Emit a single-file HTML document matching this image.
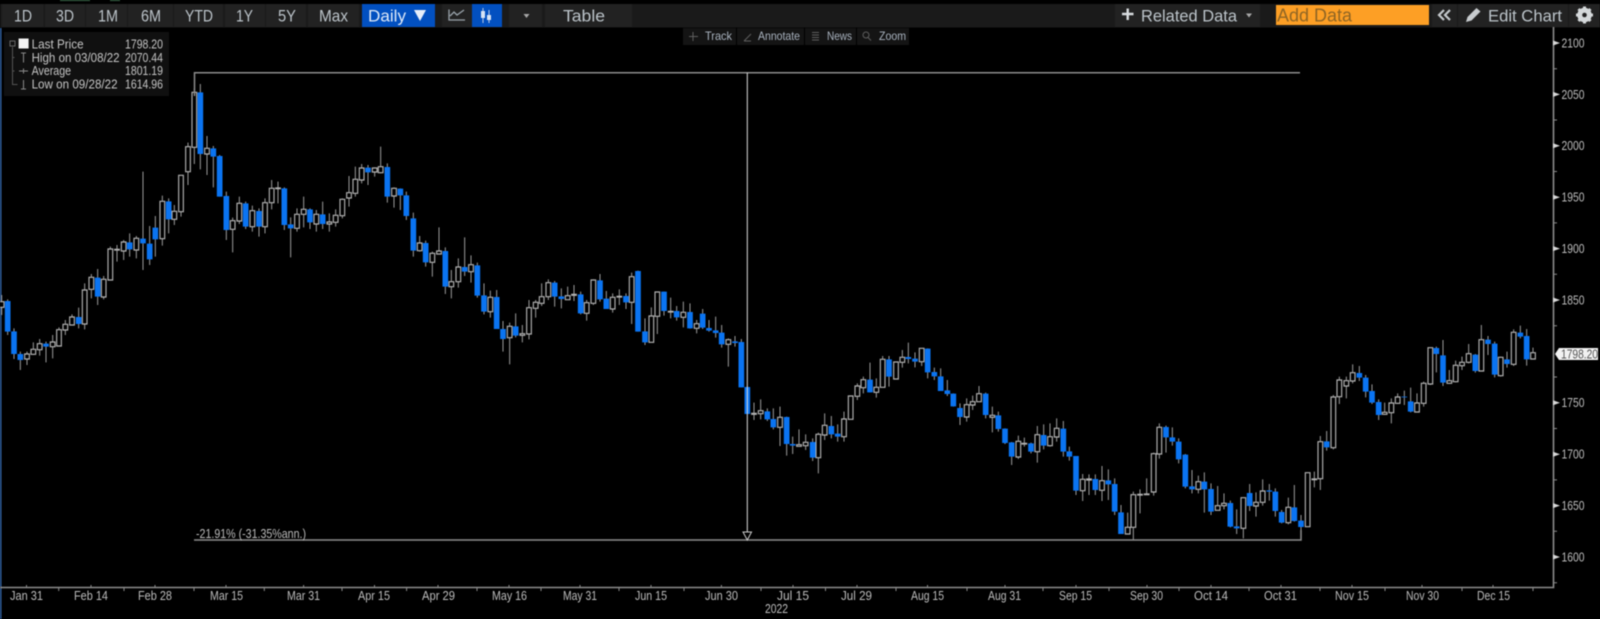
<!DOCTYPE html>
<html><head><meta charset="utf-8"><title>Chart</title>
<style>
html,body{margin:0;padding:0;background:#000;width:1600px;height:619px;overflow:hidden}
svg{display:block;filter:blur(.45px)}
text{font-family:"Liberation Sans",sans-serif}
.w{fill:none;stroke:#9a9a9a;stroke-width:3}
.b{fill:none;stroke:#0a74f2;stroke-width:17}
.h{fill:#000;stroke:#b4b4b4;stroke-width:3.4}
.tb{font-size:17px;fill:#bcc4ca}
.lg{font-size:12.5px;fill:#c4c4c4}
.ax{font-size:12.5px;fill:#bcbcbc}
.mt{font-size:12px;fill:#aab4c0}
</style></head><body>
<svg width="1600" height="619" viewBox="0 0 1600 619" xmlns="http://www.w3.org/2000/svg">
<rect width="1600" height="619" fill="#000"/>
<rect x="0" y="28" width="1.5" height="591" fill="#2f5f9f"/>
<!-- toolbar -->
<rect x="0" y="4" width="1600" height="23.5" fill="#1a1a1a"/>
<path d="M60 0h30v1h-30zM110 0h10v1h-10z" fill="#3a6a4a"/>
<g fill="#222">
<rect x="2" y="4" width="41.5" height="23"/><rect x="45" y="4" width="40" height="23"/><rect x="86" y="4" width="41" height="23"/><rect x="128" y="4" width="45" height="23"/><rect x="174" y="4" width="49" height="23"/><rect x="225" y="4" width="40" height="23"/><rect x="266" y="4" width="40" height="23"/><rect x="308" y="4" width="51" height="23"/><rect x="442" y="4" width="30" height="23"/><rect x="509" y="4" width="33" height="23"/><rect x="545" y="4" width="87" height="23"/><rect x="1115" y="4" width="145" height="23"/><rect x="1432" y="4" width="25" height="23"/><rect x="1458" y="4" width="110" height="23"/><rect x="1569" y="4" width="31" height="23"/>
</g>
<rect x="362" y="4" width="73" height="23" fill="#0250c0"/>
<rect x="472" y="4" width="30" height="23" fill="#0250c0"/>
<rect x="1276" y="5" width="153" height="20" fill="#fd9f25"/>
<g>
<text class="tb" x="14" y="21.5" textLength="18" lengthAdjust="spacingAndGlyphs">1D</text>
<text class="tb" x="56" y="21.5" textLength="18" lengthAdjust="spacingAndGlyphs">3D</text>
<text class="tb" x="98" y="21.5" textLength="20" lengthAdjust="spacingAndGlyphs">1M</text>
<text class="tb" x="141" y="21.5" textLength="20" lengthAdjust="spacingAndGlyphs">6M</text>
<text class="tb" x="185" y="21.5" textLength="28" lengthAdjust="spacingAndGlyphs">YTD</text>
<text class="tb" x="236" y="21.5" textLength="17" lengthAdjust="spacingAndGlyphs">1Y</text>
<text class="tb" x="278" y="21.5" textLength="18" lengthAdjust="spacingAndGlyphs">5Y</text>
<text class="tb" x="319" y="21.5" textLength="29" lengthAdjust="spacingAndGlyphs">Max</text>
<text class="tb" x="368" y="21.5" textLength="38" lengthAdjust="spacingAndGlyphs" style="fill:#dce8f8">Daily</text>
<text class="tb" x="563" y="21.5" textLength="42" lengthAdjust="spacingAndGlyphs">Table</text>
<text class="tb" x="1141" y="21.5" textLength="96" lengthAdjust="spacingAndGlyphs">Related Data</text>
<text class="tb" x="1277" y="21.5" textLength="75" lengthAdjust="spacingAndGlyphs" style="fill:#8f6524;font-size:18px">Add Data</text>
<text class="tb" x="1488" y="21.5" textLength="74" lengthAdjust="spacingAndGlyphs">Edit Chart</text>
</g>
<path d="M414 10h12l-6 11z" fill="#e6eefa"/>
<!-- line icon -->
<path d="M449 9.5v10.5h16M450 16l4-4 3 3 7-5" fill="none" stroke="#9aa4ac" stroke-width="1.3"/>
<!-- candle icon -->
<path d="M483 8v15M489 10v13" stroke="#b8c8e4" stroke-width="1"/>
<path d="M481 11h4v7h-4zM487 15h4v5h-4z" fill="#d8e4f4"/>
<path d="M523.5 14h6l-3 4z" fill="#a8a8a8"/>
<path d="M1246 13.5h6l-3 4z" fill="#a8a8a8"/>
<path d="M1122 14h11.5M1127.7 8.5v11.5" stroke="#d8dcdf" stroke-width="2.4"/>
<path d="M1444 10l-5 5 5 5M1450 10l-5 5 5 5" fill="none" stroke="#c4c8cc" stroke-width="2.2"/>
<path d="M1466 22l1.5-5 9-9 4 3.5-9 9z" fill="#c8cccf"/>
<!-- gear -->
<circle cx="1584.5" cy="15" r="5.5" fill="none" stroke="#d4d8da" stroke-width="3.5"/>
<path d="M1584.5 6.5v17M1576 15h17M1578.5 9l12 12M1590.5 9l-12 12" stroke="#d4d8da" stroke-width="3"/>
<circle cx="1584.5" cy="15" r="2.3" fill="#222"/>
<!-- mini toolbar -->
<g fill="#141414"><rect x="683" y="28" width="53" height="17"/><rect x="737" y="28" width="67" height="17"/><rect x="805" y="28" width="51" height="17"/><rect x="857" y="28" width="52" height="17"/></g>
<text class="mt" x="705" y="40" textLength="27" lengthAdjust="spacingAndGlyphs">Track</text>
<text class="mt" x="758" y="40" textLength="42" lengthAdjust="spacingAndGlyphs">Annotate</text>
<text class="mt" x="827" y="40" textLength="25" lengthAdjust="spacingAndGlyphs">News</text>
<text class="mt" x="879" y="40" textLength="27" lengthAdjust="spacingAndGlyphs">Zoom</text>
<path d="M693 32v9M689 36.5h9M744 41l7-7M744 41h7M812 32.5h7M812 35h7M812 37.5h7M812 40h7" fill="none" stroke="#5e5e5e" stroke-width="1"/>
<circle cx="866" cy="35" r="3" fill="none" stroke="#5e5e5e"/><path d="M868 37.5l3 3" stroke="#5e5e5e"/>
<!-- candles -->
<g transform="translate(0 170) scale(.33333)">
<path class="w" d="M5 375V435M23 388V495M42 475V567M61 545V600M81 545V585M100 517V555M119 507V557M138 515V577M158 495V565M177 472V528M196 450V495M216 433V465M236 413V475M254 340V478M274 312V385M293 297V405M311 318V388M331 230V331M351 225V275M371 210V270M389 190V260M409 198V265M429 5V300M449 168V285M466 138V260M487 77V227M506 85V190M523 105V165"/>
<path class="h" d="M-2 395h14V412h-14zM74 552h14V567h-14zM93 538h14V553h-14zM112 521h14V539h-14zM151 516h14V530h-14zM170 479h14V528h-14zM189 463h14V480h-14zM209 441h14V465h-14zM247 360h14V462h-14zM267 322h14V358h-14zM304 328h14V381h-14zM324 237h14V330h-14zM344 238h14V240h-14zM364 216h14V243h-14zM402 205h14V240h-14zM480 94h14V206h-14zM516 124h14V148h-14z"/>
<path class="b" d="M23 393V485M42 484V552M61 552V570M138 521V530M236 441V462M293 323V380M389 217V238M429 206V220M449 221V268M466 173V208M506 94V148"/>
</g>
<g transform="translate(0 70) scale(.33333)">
<path class="w" d="M543 315V440M564 218V345M583 55V282M601 42V298M621 198V315M640 228V352M659 255V380M679 365V510M698 443V547M718 380V462M737 395V477M757 407V485M777 415V500M795 385V490"/>
<path class="h" d="M536 316h14V425h-14zM557 230h14V305h-14zM576 67h14V232h-14zM614 235h14V252h-14zM691 452h14V478h-14zM711 400h14V453h-14zM750 422h14V470h-14zM788 398h14V470h-14z"/>
<path class="b" d="M601 67V252M640 235V260M659 258V380M679 378V480M737 400V470M777 423V470"/>
</g>
<g transform="translate(270 130) scale(.33333)">
<path class="w" d="M5 150V238M24 155V220M43 172V300M62 262V382M81 235V305M101 200V292M120 235V297M139 240V305M158 215V297M178 250V305M197 238V290M217 205V265M237 138V230M256 110V200M275 102V160M294 105V165M314 112V140M332 50V130M352 100V218M372 172V233M391 175V240M409 185V270M430 248V380M449 318V365M467 332V410M487 365V440M507 292V372M526 352V492M544 420V505M565 385V473M584 322V438M603 376V458M622 398V503M642 460V553M661 482V563M680 480V597M699 573V665M719 578V703M737 550V622M757 585V637M777 510V628M797 510V563"/>
<path class="h" d="M-2 175h14V218h-14zM17 174h14V176h-14zM74 253h14V295h-14zM94 238h14V253h-14zM132 253h14V282h-14zM171 276h14V282h-14zM190 256h14V277h-14zM210 208h14V257h-14zM230 188h14V204h-14zM249 148h14V190h-14zM268 114h14V150h-14zM307 114h14V126h-14zM325 110h14V128h-14zM365 175h14V198h-14zM442 339h14V362h-14zM480 370h14V397h-14zM500 363h14V372h-14zM537 455h14V470h-14zM558 411h14V455h-14zM596 404h14V425h-14zM654 502h14V545h-14zM712 589h14V623h-14zM750 611h14V616h-14zM770 533h14V612h-14zM790 517h14V535h-14z"/>
<path class="b" d="M43 175V285M62 283V295M120 238V277M158 253V282M294 113V127M352 111V200M391 176V196M409 196V258M430 265V362M467 339V397M526 363V470M584 411V425M622 406V497M642 496V545M680 501V597M699 597V627M737 589V617"/>
</g>
<g transform="translate(540 250) scale(.33333)">
<path class="w" d="M5 100V168M25 88V150M44 93V170M64 115V175M83 110V150M102 105V153M122 125V193M140 150V212M160 88V165M180 72V155M199 123V177M218 130V188M238 118V165M258 130V177M275 68V222M294 62V245M315 205V285M334 172V277M352 125V252M372 125V197M392 143V205M410 168V212M430 155V232M450 160V236M470 210V250M488 177V237M507 210V245M527 200V263M545 225V293M565 265V350M585 258V290M604 267V412M622 410V492M642 458V510M662 448V508M682 475V513M700 475V538M720 470V588M740 500V617M758 560V612M777 538V590M797 553V600"/>
<path class="h" d="M-2 140h14V160h-14zM18 98h14V140h-14zM76 137h14V149h-14zM95 133h14V136h-14zM133 158h14V190h-14zM153 90h14V160h-14zM211 142h14V177h-14zM231 139h14V141h-14zM268 80h14V157h-14zM327 198h14V277h-14zM345 126h14V199h-14zM385 184h14V186h-14zM423 187h14V202h-14zM463 221h14V235h-14zM558 269h14V283h-14zM635 490h14V493h-14zM655 482h14V491h-14zM713 502h14V532h-14zM770 584h14V589h-14zM790 577h14V587h-14z"/>
<path class="b" d="M44 98V140M64 139V147M122 133V190M180 91V148M199 146V177M258 138V157M294 63V245M315 244V277M372 125V183M410 183V202M450 186V235M488 191V233M507 234V242M527 241V249M545 248V283M585 274V279M604 276V412M622 411V492M682 484V508M700 507V532M740 501V582M758 582V587"/>
</g>
<g transform="translate(810 330) scale(.33333)">
<path class="w" d="M8 325V393M25 308V430M44 250V330M64 258V325M83 283V335M102 245V335M122 197V268M142 160V210M160 140V190M180 98V187M199 145V203M218 78V172M237 78V170M258 95V147M277 60V113M295 38V100M315 67V112M335 55V108M353 55V145M373 113V150M392 115V183M412 150V198M430 190V230M450 220V285M470 205V275M488 197V240M507 168V215M527 188V265M547 230V307M565 245V305M585 295V342M605 336V405M625 317V387M643 323V350M663 338V370M682 288V398M701 283V358M720 280V350M740 265V335M760 273V380M778 350V392M798 378V495"/>
<path class="h" d="M18 313h14V383h-14zM37 286h14V315h-14zM95 267h14V320h-14zM115 198h14V268h-14zM135 168h14V199h-14zM153 149h14V173h-14zM192 172h14V187h-14zM211 88h14V172h-14zM251 96h14V147h-14zM270 82h14V97h-14zM328 55h14V95h-14zM463 224h14V261h-14zM481 215h14V225h-14zM500 191h14V215h-14zM540 256h14V262h-14zM618 334h14V381h-14zM636 340h14V342h-14zM675 314h14V365h-14zM713 320h14V347h-14zM733 295h14V321h-14z"/>
<path class="b" d="M8 336V383M64 288V313M83 311V320M180 149V187M237 88V140M295 81V87M315 86V95M353 56V127M373 126V139M392 139V183M412 181V192M430 191V229M450 234V261M527 191V255M565 256V297M585 296V339M605 337V380M663 340V365M701 315V347M760 296V365M778 364V380M798 378V482"/>
</g>
<g transform="translate(1080 330) scale(.33333)">
<path class="w" d="M8 432V513M27 433V495M46 433V495M66 408V513M85 418V510M104 445V555M123 525V612M143 548V612M160 485V630M180 478V550M200 445V495M221 368V497M238 280V386M258 287V368M277 292V347M296 325V400M316 372V475M336 420V490M355 437V490M373 427V548M393 460V555M413 468V541M432 490V538M451 512V592M470 538V612M490 502V625M509 462V543M528 487V560M548 448V527M568 462V512M586 475V560M605 540V580M625 503V583M643 465V575M663 555V625M683 427V590M703 425V472M721 318V480M740 303V362M760 195V358M778 140V222"/>
<path class="h" d="M1 448h14V482h-14zM20 447h14V450h-14zM59 452h14V481h-14zM136 592h14V612h-14zM153 494h14V592h-14zM173 493h14V495h-14zM193 492h14V494h-14zM214 371h14V486h-14zM231 292h14V372h-14zM348 455h14V478h-14zM406 527h14V541h-14zM425 520h14V527h-14zM483 503h14V595h-14zM521 517h14V528h-14zM541 483h14V517h-14zM618 532h14V578h-14zM676 428h14V590h-14zM696 447h14V449h-14zM714 335h14V446h-14zM753 201h14V353h-14zM771 150h14V200h-14z"/>
<path class="b" d="M46 447V480M85 451V463M104 462V545M123 547V612M258 291V322M277 322V335M296 335V388M316 374V470M336 469V478M373 455V478M393 477V545M451 519V590M470 589V595M509 489V528M568 481V485M586 485V543M605 546V578M643 532V573M663 572V591M740 334V352"/>
</g>
<g transform="translate(1300 300) scale(.33333)">
<path class="w" d="M139 230V295M158 193V250M178 198V243M197 225V292M216 253V312M236 298V360M254 308V345M274 295V370M293 280V312M313 272V315M332 263V337M351 280V337M371 245V320M391 142V255M409 140V217M429 120V258M448 210V252M467 182V247M486 170V210M506 132V190M526 162V218M544 75V213M564 108V165M584 125V232M602 170V230M621 155V203M641 88V198M661 77V115M680 87V197M699 143V178"/>
<path class="h" d="M132 242h14V258h-14zM151 218h14V243h-14zM247 337h14V343h-14zM267 309h14V338h-14zM286 291h14V310h-14zM344 309h14V336h-14zM364 250h14V310h-14zM384 143h14V252h-14zM441 242h14V250h-14zM460 196h14V245h-14zM479 187h14V197h-14zM499 161h14V187h-14zM537 119h14V213h-14zM595 172h14V227h-14zM634 97h14V193h-14zM692 158h14V177h-14z"/>
<path class="b" d="M178 219V233M197 233V275M216 273V308M236 306V345M313 290V292M332 304V335M409 144V162M429 166V248M526 164V213M564 119V132M584 131V224M621 178V192M661 98V110M680 108V178"/>
</g>
<!-- annotations -->
<path d="M194.5 96V72.7H1300" fill="none" stroke="#8c8c8c" stroke-width="1.5"/>
<path d="M194 540H1301V530" fill="none" stroke="#8c8c8c" stroke-width="1.5"/>
<path d="M747.3 72.7V532" stroke="#dcdcdc" stroke-width="1"/>
<path d="M743 532h8.5l-4.2 8z" fill="none" stroke="#c8c8c8" stroke-width="1"/>
<text class="ax" x="196" y="538" textLength="110" lengthAdjust="spacingAndGlyphs">-21.91% (-31.35%ann.)</text>
<!-- legend -->
<rect x="4" y="32" width="165" height="64" fill="#101010"/>
<path d="M12.5 47V84.5h5M12.5 57.5h2M12.5 71h2" fill="none" stroke="#555" stroke-width="1"/>
<rect x="10" y="41" width="5" height="5" fill="none" stroke="#666"/>
<rect x="18.6" y="38.5" width="10" height="10" fill="#f4f4f4"/>
<path d="M21 53h5M23.5 53v9.5M19 71h9M23.5 68.5v5M23.5 80v9M21 89h5" fill="none" stroke="#8a8a8a" stroke-width="1"/>
<text class="lg" x="31.6" y="48.5" textLength="52" lengthAdjust="spacingAndGlyphs">Last Price</text>
<text class="lg" x="125" y="48.5" textLength="38" lengthAdjust="spacingAndGlyphs">1798.20</text>
<text class="lg" x="31.6" y="62" textLength="88" lengthAdjust="spacingAndGlyphs">High on 03/08/22</text>
<text class="lg" x="125" y="62" textLength="38" lengthAdjust="spacingAndGlyphs">2070.44</text>
<text class="lg" x="31.6" y="75" textLength="39.5" lengthAdjust="spacingAndGlyphs">Average</text>
<text class="lg" x="125" y="75" textLength="38" lengthAdjust="spacingAndGlyphs">1801.19</text>
<text class="lg" x="31.6" y="88.5" textLength="86" lengthAdjust="spacingAndGlyphs">Low on 09/28/22</text>
<text class="lg" x="125" y="88.5" textLength="38" lengthAdjust="spacingAndGlyphs">1614.96</text>
<!-- axes -->
<path d="M1553.5 27V587.5H0" fill="none" stroke="#8c8c8c" stroke-width="1.6"/>
<path d="M1553 68.7h4M1553 120h4M1553 171.5h4M1553 222.9h4M1553 274.3h4M1553 325.7h4M1553 377h4M1553 428.5h4M1553 479.9h4M1553 531.3h4M1553 582.7h4" stroke="#8c8c8c" stroke-width="1"/>
<path d="M1553 40.5l7 2.5-7 2.5zM1553 91.9l7 2.5-7 2.5zM1553 143.3l7 2.5-7 2.5zM1553 194.7l7 2.5-7 2.5zM1553 246.1l7 2.5-7 2.5zM1553 297.5l7 2.5-7 2.5zM1553 400.3l7 2.5-7 2.5zM1553 451.7l7 2.5-7 2.5zM1553 503.1l7 2.5-7 2.5zM1553 554.5l7 2.5-7 2.5z" fill="#d8d8d8"/>
<text class="ax" x="1561.5" y="47.5" textLength="23" lengthAdjust="spacingAndGlyphs">2100</text>
<text class="ax" x="1561.5" y="98.8" textLength="23" lengthAdjust="spacingAndGlyphs">2050</text>
<text class="ax" x="1561.5" y="150.2" textLength="23" lengthAdjust="spacingAndGlyphs">2000</text>
<text class="ax" x="1561.5" y="201.6" textLength="23" lengthAdjust="spacingAndGlyphs">1950</text>
<text class="ax" x="1561.5" y="253" textLength="23" lengthAdjust="spacingAndGlyphs">1900</text>
<text class="ax" x="1561.5" y="304.4" textLength="23" lengthAdjust="spacingAndGlyphs">1850</text>
<text class="ax" x="1561.5" y="407.2" textLength="23" lengthAdjust="spacingAndGlyphs">1750</text>
<text class="ax" x="1561.5" y="458.6" textLength="23" lengthAdjust="spacingAndGlyphs">1700</text>
<text class="ax" x="1561.5" y="510" textLength="23" lengthAdjust="spacingAndGlyphs">1650</text>
<text class="ax" x="1561.5" y="561.4" textLength="23" lengthAdjust="spacingAndGlyphs">1600</text>
<path d="M1555 354l4-6h39v12h-39z" fill="#f2f2f2"/>
<text x="1561" y="358.5" font-size="12.5" fill="#555" textLength="37" lengthAdjust="spacingAndGlyphs">1798.20</text>
<path d="M26.5 585V588M91 585V588M155 585V588M226 585V588M303.6 585V588M374.5 585V588M438 585V588M509 585V588M580 585V588M651 585V588M721.4 585V588M793 585V588M857 585V588M927.5 585V588M1005 585V588M1076 585V588M1147 585V588M1211 585V588M1281 585V588M1352 585V588M1422 585V588M1493 585V588" stroke="#8c8c8c" stroke-width="1"/>
<path d="M58.7 587V591M124 587V591M194 587V591M264.3 587V591M342 587V591M406.6 587V591M477 587V591M541 587V591M619 587V591M684 587V591M761 587V591M825.5 587V591M896 587V591M967 587V591M1043 587V591M1109 587V591M1179 587V591M1249 587V591M1320 587V591M1385 587V591M1462 587V591M1533 587V591" stroke="#8c8c8c" stroke-width="1"/>
<g>
<text class="ax" x="10" y="600" textLength="33" lengthAdjust="spacingAndGlyphs">Jan 31</text>
<text class="ax" x="74" y="600" textLength="34" lengthAdjust="spacingAndGlyphs">Feb 14</text>
<text class="ax" x="138" y="600" textLength="34" lengthAdjust="spacingAndGlyphs">Feb 28</text>
<text class="ax" x="210" y="600" textLength="33" lengthAdjust="spacingAndGlyphs">Mar 15</text>
<text class="ax" x="287" y="600" textLength="33" lengthAdjust="spacingAndGlyphs">Mar 31</text>
<text class="ax" x="358" y="600" textLength="32" lengthAdjust="spacingAndGlyphs">Apr 15</text>
<text class="ax" x="422" y="600" textLength="33" lengthAdjust="spacingAndGlyphs">Apr 29</text>
<text class="ax" x="492" y="600" textLength="35" lengthAdjust="spacingAndGlyphs">May 16</text>
<text class="ax" x="563" y="600" textLength="34" lengthAdjust="spacingAndGlyphs">May 31</text>
<text class="ax" x="635" y="600" textLength="32" lengthAdjust="spacingAndGlyphs">Jun 15</text>
<text class="ax" x="705" y="600" textLength="33" lengthAdjust="spacingAndGlyphs">Jun 30</text>
<text class="ax" x="777" y="600" textLength="32" lengthAdjust="spacingAndGlyphs">Jul 15</text>
<text class="ax" x="841" y="600" textLength="31" lengthAdjust="spacingAndGlyphs">Jul 29</text>
<text class="ax" x="911" y="600" textLength="33" lengthAdjust="spacingAndGlyphs">Aug 15</text>
<text class="ax" x="988" y="600" textLength="33" lengthAdjust="spacingAndGlyphs">Aug 31</text>
<text class="ax" x="1059" y="600" textLength="33" lengthAdjust="spacingAndGlyphs">Sep 15</text>
<text class="ax" x="1130" y="600" textLength="33" lengthAdjust="spacingAndGlyphs">Sep 30</text>
<text class="ax" x="1194" y="600" textLength="34" lengthAdjust="spacingAndGlyphs">Oct 14</text>
<text class="ax" x="1264" y="600" textLength="33" lengthAdjust="spacingAndGlyphs">Oct 31</text>
<text class="ax" x="1335" y="600" textLength="34" lengthAdjust="spacingAndGlyphs">Nov 15</text>
<text class="ax" x="1406" y="600" textLength="33" lengthAdjust="spacingAndGlyphs">Nov 30</text>
<text class="ax" x="1477" y="600" textLength="33" lengthAdjust="spacingAndGlyphs">Dec 15</text>
<text class="ax" x="765" y="613" textLength="23" lengthAdjust="spacingAndGlyphs">2022</text>
</g>
</svg>
</body></html>
